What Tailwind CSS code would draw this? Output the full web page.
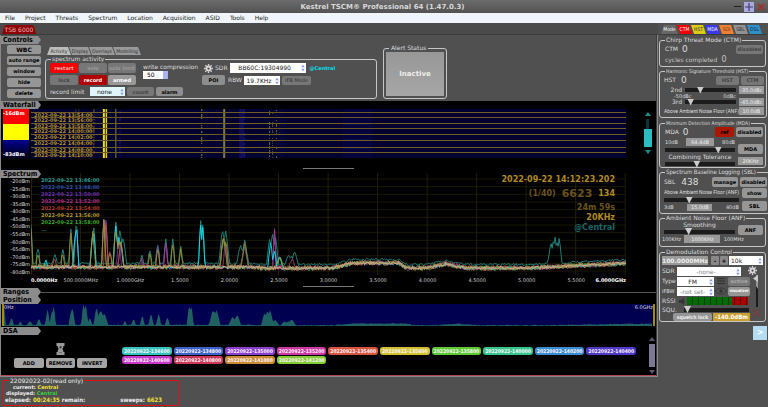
<!DOCTYPE html>
<html lang="en">
<head>
<meta charset="utf-8">
<title>Kestrel TSCM Professional</title>
<script src="https://cdn.jsdelivr.net/npm/@tailwindcss/browser@4"></script>
</head>
<body class="flex min-h-screen flex-col overflow-x-hidden bg-[#505050] font-['DejaVu_Sans','Verdana',sans-serif] text-[6px] leading-[8px] text-[#dedede]">

<svg class="hidden" aria-hidden="true">
  <symbol id="updown" viewBox="0 0 4 8"><path d="M.3 3.2 2 .8 3.7 3.2zM.3 4.8 2 7.2 3.7 4.8z" fill="#8b9af5"/></symbol>
  <symbol id="gear" viewBox="0 0 20 20"><path fill="none" stroke="#d6d6d6" stroke-width="4" d="M10 5.5a4.5 4.5 0 1 0 .01 0z"/><path stroke="#d6d6d6" stroke-width="3" d="M10 0v4M10 16v4M0 10h4M16 10h4M3 3l3 3M14 14l3 3M17 3l-3 3M6 14l-3 3"/></symbol>
</svg>

<header>
  <div class="flex h-[13px] items-center bg-linear-to-b from-[#6c6c6c] to-[#525252]">
    <span class="flex-1"></span>
    <h1 class="text-[7px] font-bold text-[#d8d8d8]">Kestrel TSCM® Professional 64 (1.47.0.3)</h1>
    <div class="flex flex-1 items-center justify-end gap-[3px] pr-[3px]">
      <button aria-label="Minimize" class="h-[1px] w-[7px] bg-[#222]"></button>
      <button aria-label="Maximize" class="flex size-[10px] items-center justify-center bg-[#aaa8de]"><svg class="size-[8px]" viewBox="0 0 8 8"><path d="M4 0v8M0 4h8" stroke="#3f3f6c" stroke-width="1.2"/></svg></button>
      <button aria-label="Close" class="size-[8px]"><svg class="size-[8px]" viewBox="0 0 8 8"><path d="M1 1l6 6M7 1 1 7" stroke="#b02a2a" stroke-width="1.6"/></svg></button>
    </div>
  </div>
  <nav class="flex h-[10px] items-center gap-[10px] bg-[#eff5fa] pl-[5px] text-[#222]">
    <a href="#">File</a><a href="#">Project</a><a href="#">Threats</a><a href="#">Spectrum</a><a href="#">Location</a><a href="#">Acquisition</a><a href="#">ASID</a><a href="#">Tools</a><a href="#">Help</a>
  </nav>
</header>

<div class="flex flex-1">
<div class="flex min-w-0 flex-1 flex-col">
  <div class="flex h-[12px] items-end border-b border-[#3c3c3c] bg-[#4a4a4a] pl-[2px]">
    <button class="h-[9px] w-[34px] bg-[#8e0000] text-[#e8b8b8] [clip-path:polygon(0_100%,2px_20%,4px_0,30px_0,32px_20%,100%_100%)]">TSB 6000</button>
  </div>

  <div class="flex flex-1 flex-col">
  <div class="border-x border-[#888]">
    <!-- Controls -->
    <section class="flex h-[66px] border-r border-[#3c3c3c] bg-[#505050]">
      <div class="w-[40px]">
        <h2 class="mt-[1px] h-[8px] bg-[#8c8c8c] pl-[2px] font-['DejaVu_Sans_Condensed','DejaVu_Sans',sans-serif] text-[7px] font-bold text-black [clip-path:polygon(0_0,37px_0,100%_50%,37px_100%,0_100%)]">Controls</h2>
        <div class="flex flex-col gap-[2px] pl-[6px] pt-[1px] text-[6px] leading-[9px] font-bold text-black">
          <button class="h-[9px] rounded-[2px] bg-[#969696]">WBC</button>
          <button class="h-[9px] rounded-[2px] bg-[#969696] text-[5px]">auto range</button>
          <button class="h-[9px] rounded-[2px] bg-[#969696] text-[5px]">window</button>
          <button class="h-[9px] rounded-[2px] bg-[#969696] text-[5px]">hide</button>
          <button class="h-[9px] rounded-[2px] bg-[#969696] text-[5px]">delete</button>
        </div>
      </div>
      <div class="ml-[4px] flex w-[332px] flex-col pt-[12px]">
        <div class="flex h-[8px] pl-[2px] font-['DejaVu_Sans_Condensed','DejaVu_Sans',sans-serif] text-[5px] text-[#333]">
          <button class="w-[24px] bg-[#bbb] [clip-path:polygon(0_100%,3px_0,21px_0,100%_100%)]">Activity</button>
          <button class="-ml-[2px] w-[22px] bg-[#999] [clip-path:polygon(0_0,19px_0,100%_100%,3px_100%)]">Display</button>
          <button class="-ml-[2px] w-[26px] bg-[#999] [clip-path:polygon(0_0,23px_0,100%_100%,3px_100%)]">Overlays</button>
          <button class="-ml-[2px] w-[28px] bg-[#999] [clip-path:polygon(0_0,25px_0,100%_100%,3px_100%)]">Modelling</button>
        </div>
        <fieldset class="h-[44px] rounded-[3px] border border-[#c6c6c6] px-[4px]">
          <legend class="ml-[1px] px-[1px]">spectrum activity</legend>
          <div class="flex">
            <div class="grid grid-cols-[28px_28px_28px] gap-x-[1px] gap-y-[2px] text-center text-[5px] leading-[10px] font-bold">
              <button class="h-[10px] rounded-[2px] bg-[#f80000] text-[#ffb0b0]">restart</button>
              <button class="h-[10px] rounded-[2px] bg-[#777] text-[#999]">solo</button>
              <button class="h-[10px] rounded-[2px] bg-[#777] whitespace-nowrap text-[#999]">solo limit</button>
              <button class="h-[10px] rounded-[2px] bg-[#777] text-[#444]">lock</button>
              <button class="h-[10px] rounded-[2px] bg-[#b00000] text-white">record</button>
              <button class="h-[10px] rounded-[2px] bg-[#999] text-white">armed</button>
            </div>
            <div class="ml-[7px] w-[52px]">
              <label for="wc" class="block whitespace-nowrap">write compression</label>
              <input id="wc" value="50" class="h-[8px] w-[25px] bg-linear-to-r from-white from-80% to-[#a9b4f4] to-80% pl-[4px] text-[6px] text-black">
            </div>
            <div class="ml-[7px] flex flex-col gap-[2px]">
              <div class="flex items-center gap-[2px]">
                <svg class="ml-[2px] size-[9px]"><use href="#gear"/></svg>
                <label for="sdr">SDR</label>
                <span class="relative flex w-[76px]"><select id="sdr" class="h-[10px] w-full appearance-none bg-white pr-[6px] text-[6px] leading-[10px] text-[#222] [text-align-last:center]"><option>BB60C:19304990</option></select><svg class="absolute top-[1px] right-[1px] h-[8px] w-[4px]"><use href="#updown"/></svg></span>
                <b class="pl-[2px] text-[5px] text-[#00e0f0]">@Central</b>
              </div>
              <div class="flex items-center gap-[2px]">
                <button class="h-[10px] w-[23px] rounded-[2px] bg-[#8e8e8e] text-[5px] font-bold text-black">POI</button>
                <label for="rbw" class="pl-[1px]">RBW</label>
                <span class="relative flex w-[36px]"><select id="rbw" class="h-[9px] w-full appearance-none bg-white pr-[6px] text-[6px] leading-[9px] text-[#222] [text-align-last:center]"><option>19.7KHz</option></select><svg class="absolute top-[1px] right-[1px] h-[8px] w-[4px]"><use href="#updown"/></svg></span>
                <button class="h-[9px] w-[29px] rounded-[2px] bg-[#777] text-[5px] leading-[9px] text-[#333]">IFB Mode</button>
              </div>
            </div>
          </div>
          <div class="mt-[2px] flex items-center gap-[2px]">
            <label for="rl" class="w-[38px] whitespace-nowrap">record limit</label>
            <span class="relative flex w-[35px]"><select id="rl" class="h-[9px] w-full appearance-none bg-[#def5fa] pr-[6px] text-[6px] leading-[9px] text-[#222] [text-align-last:center]"><option>none</option></select><svg class="absolute top-[1px] right-[1px] h-[8px] w-[4px]"><use href="#updown"/></svg></span>
            <button class="h-[9px] w-[27px] rounded-[2px] bg-[#777] text-[5px] font-bold text-[#444]">count</button>
            <button class="h-[9px] w-[27px] rounded-[2px] bg-[#8e8e8e] text-[5px] font-bold text-black">alarm</button>
          </div>
        </fieldset>
      </div>
      <fieldset class="mt-[9px] ml-[6px] flex h-[55px] w-[64px] rounded-[3px] border border-[#c6c6c6] px-[2px]">
        <legend class="ml-[3px] px-[2px]">Alert Status</legend>
        <button class="h-[44px] w-full bg-linear-to-b from-[#989898] to-[#a6a6a6] text-[7px] font-bold text-[#eee]">Inactive</button>
      </fieldset>
    </section>

    <div class="flex h-[275px] flex-col border-r border-[#3c3c3c] bg-black">
      <!-- Waterfall -->
      <h2 class="h-[8px] w-[40px] shrink-0 bg-[#8c8c8c] pl-[2px] font-['DejaVu_Sans_Condensed','DejaVu_Sans',sans-serif] text-[7px] font-bold text-black [clip-path:polygon(0_0,37px_0,100%_50%,37px_100%,0_100%)]">Waterfall</h2>
      <div class="flex h-[59px] shrink-0">
        <div class="ml-[2px] flex h-[49px] w-[26px] flex-col justify-between bg-linear-to-b from-[#f00] from-30% via-[#ff0] via-30% to-[#ff0] to-62% text-[5px] font-bold text-white">
          <span>-16dBm</span>
          <span class="flex h-[18px] items-end bg-linear-to-b from-[#000090] to-[#00001c]">-83dBm</span>
        </div>
        <div class="relative ml-[2px] h-[49px] min-w-0 flex-1 overflow-hidden bg-[#000030]">
          <svg id="fall" class="h-full w-full" viewBox="0 0 596 49" preserveAspectRatio="none"></svg>
          <div id="falltimes" class="absolute inset-0 text-[5px] leading-[6px] font-bold text-[#b49128]"></div>
        </div>
        <div class="flex w-[30px] flex-col items-center gap-[1px] pt-[3px] pl-[13px]">
          <svg class="h-[4px] w-[6px]" viewBox="0 0 6 4"><path d="M0 4 3 0l3 4z" fill="#208c8c"/></svg>
          <i class="mt-[2px] h-[10px] w-[3px] bg-[#0b3236]"></i>
          <i class="-mt-[1px] h-[18px] w-[8px] bg-[#29bcc0]"></i>
          <svg class="mt-[2px] h-[4px] w-[6px]" viewBox="0 0 6 4"><path d="M0 0h6L3 4z" fill="#208c8c"/></svg>
        </div>
      </div>
      <i class="mx-auto h-[1px] w-[51px] shrink-0 bg-[#777]"></i>
      <!-- Spectrum -->
      <h2 class="mt-[1px] h-[8px] w-[40px] shrink-0 bg-[#8c8c8c] pl-[2px] font-['DejaVu_Sans_Condensed','DejaVu_Sans',sans-serif] text-[7px] font-bold text-black [clip-path:polygon(0_0,37px_0,100%_50%,37px_100%,0_100%)]">Spectrum</h2>
      <div class="-mt-[5px] flex h-[102px] shrink-0 pr-[30px]">
        <div class="flex w-[30px] flex-col justify-between pt-[5px] pr-px text-right text-[5px] leading-[6px] text-[#ddd]" id="ylabels"></div>
        <div class="relative min-w-0 flex-1">
          <svg id="plot" class="h-full w-full" viewBox="0 0 596 102" preserveAspectRatio="none"></svg>
          <div id="legend" class="absolute top-[4px] left-[10px] text-[5px] leading-[7px] font-bold"></div>
          <div class="absolute top-[2px] right-[11px] text-right text-[8px] leading-[10px] font-bold text-[#6a5218]">
            <p class="text-[#b08a20]">2022-09-22 14:12:23.202</p>
            <p class="flex h-[18px] items-center justify-end gap-[6px]">(1/40) <span class="text-[11px]">6623</span><span class="text-[#b08a20]">134</span></p>
            <p>24m 59s</p>
            <p class="text-[#b08a20]">20KHz</p>
            <p class="text-[#1c6666]">@Central</p>
          </div>
        </div>
      </div>
      <div class="mt-[1px] flex h-[10px] shrink-0 pr-[30px] pl-[30px] text-[5px] whitespace-nowrap text-[#ccc]">
        <b class="w-[25px] text-white">0.0000Hz</b><span class="flex-1 text-center">500.0000MHz</span><span class="flex-1 text-center">1.0000GHz</span><span class="flex-1 text-center">1.5000</span><span class="flex-1 text-center">2.0000</span><span class="flex-1 text-center">2.5000</span><span class="flex-1 text-center">3.0000</span><span class="flex-1 text-center">3.5000</span><span class="flex-1 text-center">4.0000</span><span class="flex-1 text-center">4.5000</span><span class="flex-1 text-center">5.0000</span><span class="flex-1 text-center">5.5000</span><b class="flex w-[25px] justify-end text-white">6.0000GHz</b>
      </div>
      <i class="mx-auto h-[1px] w-[51px] shrink-0 bg-[#777]"></i>
      <!-- Ranges and position -->
      <div class="mt-[1px] flex h-[8px] shrink-0 items-center">
        <h2 class="h-[8px] w-[40px] bg-[#8c8c8c] pl-[2px] font-['DejaVu_Sans_Condensed','DejaVu_Sans',sans-serif] text-[7px] font-bold text-black [clip-path:polygon(0_0,37px_0,100%_50%,37px_100%,0_100%)]">Ranges</h2>
        <i class="h-[1px] flex-1 bg-[#555]"></i>
      </div>
      <h2 class="h-[8px] w-[40px] shrink-0 bg-[#8c8c8c] pl-[2px] font-['DejaVu_Sans_Condensed','DejaVu_Sans',sans-serif] text-[7px] font-bold text-black [clip-path:polygon(0_0,37px_0,100%_50%,37px_100%,0_100%)]">Position</h2>
      <div class="relative mx-px h-[22px] shrink-0 border-x-2 border-[#a08c00] bg-[#000050]">
        <svg id="band" class="h-full w-full" viewBox="0 0 654 22" preserveAspectRatio="none"></svg>
        <div class="absolute inset-x-0 top-0 flex justify-between text-[5px] leading-[6px] text-[#ddd]"><span>0Hz</span><span>6.0GHz</span></div>
      </div>
      <!-- DSA -->
      <h2 class="mt-[1px] h-[8px] w-[40px] shrink-0 bg-[#8c8c8c] pl-[2px] font-['DejaVu_Sans_Condensed','DejaVu_Sans',sans-serif] text-[7px] font-bold text-black [clip-path:polygon(0_0,37px_0,100%_50%,37px_100%,0_100%)]">DSA</h2>
      <div class="flex flex-1 pl-[13px]">
        <div class="flex w-[93px] flex-col items-center gap-[3px] pt-[8px]">
          <svg class="h-[12px] w-[9px]" viewBox="0 0 9 12"><path d="M.5 0h8v3H7.3v1.5L6.3 6l1 1.500V9h1.200v3h-8V9h1.200V7.500L2.700 6 1.700 4.500V3H.5z" fill="#9a9a9a"/><path d="M3.500 3.500h2v1l-1 1-1-1zM3 9.500h3" fill="#333" stroke="#555" stroke-width=".6"/></svg>
          <div class="flex w-full gap-[2px] text-[5px] font-bold text-black">
            <button class="h-[10px] flex-1 rounded-[2px] bg-[#a4a4a4]">ADD</button><button class="h-[10px] flex-1 rounded-[2px] bg-[#a4a4a4]">REMOVE</button><button class="h-[10px] flex-1 rounded-[2px] bg-[#a4a4a4]">INVERT</button>
          </div>
        </div>
        <div id="chips" class="mt-[12px] ml-[15px] grid flex-1 grid-cols-10 content-start gap-x-[2px] gap-y-px font-['DejaVu_Sans_Condensed','DejaVu_Sans',sans-serif] text-[5px] leading-[8px] font-bold text-[#fff5ff]"></div>
        <div class="flex w-[20px] flex-col items-end gap-[2px] pt-[2px] pr-[1px]">
          <svg class="h-[4px] w-[6px]" viewBox="0 0 6 4"><path d="M0 4 3 0l3 4z" fill="#5c5a70"/></svg>
          <i class="mt-[1px] h-[23px] w-[6px] bg-[#7b7994]"></i>
          <svg class="mt-[1px] h-[4px] w-[6px]" viewBox="0 0 6 4"><path d="M0 0h6L3 4z" fill="#5c5a70"/></svg>
        </div>
      </div>
      <i class="h-[1px] bg-[#b04848]"></i>
    </div>
  </div>
  <footer class="flex-1 border-t border-[#888] pl-[2px]">
    <fieldset class="h-[29px] w-[177px] rounded-[2px] border border-[#e01010] px-[2px] font-bold leading-[6px] text-[#eee]">
      <legend class="ml-[4px] px-[1px] font-normal leading-[7px]">22092022-02(read only)</legend>
      <p class="pl-[8px] text-[5px]">current: <span class="text-[#f4e23c]">Central</span></p>
      <p class="pl-px text-[5px]">displayed: <span class="text-[#3ad23a]">Central</span></p>
      <p class="flex h-[7px] items-center gap-[2px] font-['DejaVu_Sans_Condensed','DejaVu_Sans',sans-serif] text-[6px]">elapsed: <span class="text-[#f4e23c]">00:24:35</span> remain: <span class="pl-[33px]">sweeps:</span> <span class="text-[#f4e23c]">6623</span></p>
    </fieldset>
  </footer>
  </div>
</div>

<!-- Mode panel -->
<aside class="w-[110px] shrink-0 bg-[#505050] pr-[2px] pl-[1px]">
  <div class="flex h-[12px] items-end border-b border-[#3c3c3c] pl-[2px] font-['DejaVu_Sans_Condensed','DejaVu_Sans',sans-serif] text-[5px] leading-[9px]">
    <button class="h-[9px] w-[17px] bg-[#666] text-white [clip-path:polygon(0_100%,3px_0,14px_0,100%_100%)]">Mode</button>
    <button class="-ml-[1px] h-[9px] w-[15px] bg-[#f00000] text-white [clip-path:polygon(0_0,12px_0,100%_100%,3px_100%)]">CTM</button>
    <button class="-ml-[1px] h-[9px] w-[15px] bg-[#dccb16] text-[#333] [clip-path:polygon(0_0,12px_0,100%_100%,3px_100%)]">HST</button>
    <button class="-ml-[1px] h-[9px] w-[15px] bg-[#3838f0] text-white [clip-path:polygon(0_0,12px_0,100%_100%,3px_100%)]">MDA</button>
    <button class="-ml-[1px] h-[9px] w-[15px] bg-[#ee8030] text-[#633] [clip-path:polygon(0_0,12px_0,100%_100%,3px_100%)]">SOI</button>
    <button class="-ml-[1px] h-[9px] w-[15px] bg-[#929292] text-[#333] [clip-path:polygon(0_0,12px_0,100%_100%,3px_100%)]">SBL</button>
    <button class="-ml-[1px] h-[9px] w-[15px] bg-[#3090c8] text-[#124] [clip-path:polygon(0_0,12px_0,100%_100%,3px_100%)]">DSL</button>
  </div>

  <fieldset class="mt-px h-[31px] rounded-[3px] border border-[#c6c6c6] px-[2px]">
    <legend class="ml-[3px] px-[1px]">Chirp Threat Mode (CTM)</legend>
    <div class="flex h-[10px] items-center gap-[4px] pl-[3px]">CTM <span class="flex-1 text-[9px]">0</span><button class="h-[9px] w-[27px] rounded-[2px] bg-[#777] text-[5px] font-bold text-[#444]">disabled</button></div>
    <div class="flex h-[12px] items-center gap-[4px] pl-[3px] text-[#c4c4c4]">cycles completed <span class="text-[8px]">0</span></div>
  </fieldset>

  <fieldset class="h-[51px] rounded-[3px] border border-[#c6c6c6] px-[2px]">
    <legend class="ml-[3px] px-[1px] font-['DejaVu_Sans_Condensed','DejaVu_Sans',sans-serif] text-[5px]">Harmonic Signature Threshold (HST)</legend>
    <div class="flex h-[10px] items-center gap-[2px] pl-[2px]">HST <span class="flex-1 pl-[3px] text-[9px]">0</span><button class="h-[9px] w-[23px] rounded-[2px] bg-[#777] text-[5px] font-bold text-[#444]">HST</button><button class="h-[9px] w-[23px] rounded-[2px] bg-[#777] text-[5px] font-bold text-[#444]">CTM</button></div>
    <div class="grid grid-cols-[17px_1fr_25px] items-center gap-x-[3px] pt-px pl-[3px]">
      <label for="h2" class="text-right">2nd</label>
      <input id="h2" type="range" value="27" class="h-[8px] w-full appearance-none bg-linear-to-b from-transparent from-40% via-[#1c1c1c] via-40% to-[#1c1c1c] to-100% bg-size-[100%_6px] bg-no-repeat [&::-webkit-slider-thumb]:size-[7px] [&::-webkit-slider-thumb]:appearance-none [&::-webkit-slider-thumb]:bg-[#ccc] [&::-webkit-slider-thumb]:[clip-path:polygon(0_0,100%_0,50%_100%)]">
      <output class="h-[8px] bg-[#999] text-center text-[5px] text-[#eee]">-35.0dBc</output>
      <div class="col-span-2 flex h-[4px] items-center justify-between pl-[9px] text-[5px] leading-[4px]"><span>-50dBc</span><span>0dBc</span></div><span></span>
      <label for="h3" class="text-right">3rd</label>
      <input id="h3" type="range" value="5" class="h-[8px] w-full appearance-none bg-linear-to-b from-transparent from-40% via-[#1c1c1c] via-40% to-[#1c1c1c] to-100% bg-size-[100%_6px] bg-no-repeat [&::-webkit-slider-thumb]:size-[7px] [&::-webkit-slider-thumb]:appearance-none [&::-webkit-slider-thumb]:bg-[#ccc] [&::-webkit-slider-thumb]:[clip-path:polygon(0_0,100%_0,50%_100%)]">
      <output class="h-[8px] bg-[#999] text-center text-[5px] text-[#eee]">-45.0dBc</output>
    </div>
    <div class="flex items-center justify-between pt-px pl-[2px] text-[5px]"><span class="font-['Roboto','Liberation_Sans',sans-serif] whitespace-nowrap">Above Ambient Noise Floor (ANF)</span><output class="w-[25px] bg-[#999] text-center text-[#eee]">10.0dB</output></div>
  </fieldset>

  <fieldset class="mt-px h-[49px] rounded-[3px] border border-[#c6c6c6] px-[2px]">
    <legend class="ml-[3px] px-[1px] font-['DejaVu_Sans_Condensed','DejaVu_Sans',sans-serif] text-[5px]">Minimum Detection Amplitude (MDA)</legend>
    <div class="flex h-[10px] items-center gap-[2px] pl-[3px]">MDA <span class="flex-1 pl-[2px] text-[9px]">0</span><button class="h-[10px] w-[19px] rounded-[2px] bg-[#aa1800] text-[5px] font-bold text-black">ref</button><button class="h-[10px] w-[27px] rounded-[2px] bg-[#969696] text-[5px] font-bold text-black">disabled</button></div>
    <div class="grid grid-cols-[1fr_25px] gap-x-[3px] pt-px pl-[3px] text-[5px]">
      <div>
        <div class="flex justify-between leading-[8px]"><span>10dB</span><output class="w-[28px] bg-[#999] text-center text-[#eee]">64.4dB</output><span>80dB</span></div>
        <input aria-label="Detection amplitude" type="range" value="79" class="block h-[8px] w-full appearance-none bg-linear-to-b from-transparent from-40% via-[#1c1c1c] via-40% to-[#1c1c1c] to-100% bg-size-[100%_6px] bg-no-repeat [&::-webkit-slider-thumb]:size-[7px] [&::-webkit-slider-thumb]:appearance-none [&::-webkit-slider-thumb]:bg-[#ccc] [&::-webkit-slider-thumb]:[clip-path:polygon(0_0,100%_0,50%_100%)]">
        <label for="ct" class="block text-center text-[6px] leading-[6px]">Combining Tolerance</label>
        <input id="ct" type="range" value="45" class="block h-[8px] w-full appearance-none bg-linear-to-b from-transparent from-40% via-[#1c1c1c] via-40% to-[#1c1c1c] to-100% bg-size-[100%_6px] bg-no-repeat [&::-webkit-slider-thumb]:size-[7px] [&::-webkit-slider-thumb]:appearance-none [&::-webkit-slider-thumb]:bg-[#ccc] [&::-webkit-slider-thumb]:[clip-path:polygon(0_0,100%_0,50%_100%)]">
      </div>
      <div class="flex flex-col justify-between pt-[6px] pb-[3px]"><button class="h-[10px] rounded-[2px] bg-[#969696] font-bold text-black">MDA</button><output class="bg-[#999] text-center text-[#eee]">20KHz</output></div>
    </div>
  </fieldset>

  <fieldset class="h-[46px] rounded-[3px] border border-[#c6c6c6] px-[2px]">
    <legend class="ml-[3px] px-[1px] font-['DejaVu_Sans_Condensed','DejaVu_Sans',sans-serif] text-[6px]">Spectrum Baseline Logging (SBL)</legend>
    <div class="flex h-[11px] items-center gap-[2px] pl-[2px]">SBL <span class="flex-1 pl-[4px] text-[9px]">438</span><button class="h-[10px] w-[26px] rounded-[2px] bg-[#969696] text-[5px] font-bold text-black">manage</button><button class="h-[10px] w-[27px] rounded-[2px] bg-[#969696] text-[5px] font-bold text-black">disabled</button></div>
    <div class="grid grid-cols-[1fr_25px] gap-x-[3px] pt-px pl-[2px] text-[5px]">
      <div>
        <label for="sb" class="block text-center font-['Roboto','Liberation_Sans',sans-serif] whitespace-nowrap">Above Ambient Noise Floor (ANF)</label>
        <input id="sb" type="range" value="32" class="block h-[8px] w-full appearance-none bg-linear-to-b from-transparent from-40% via-[#1c1c1c] via-40% to-[#1c1c1c] to-100% bg-size-[100%_6px] bg-no-repeat [&::-webkit-slider-thumb]:size-[7px] [&::-webkit-slider-thumb]:appearance-none [&::-webkit-slider-thumb]:bg-[#ccc] [&::-webkit-slider-thumb]:[clip-path:polygon(0_0,100%_0,50%_100%)]">
        <div class="flex justify-between leading-[7px]"><span>3dB</span><output class="w-[25px] bg-[#999] text-center text-[#eee]">15.0dB</output><span>40dB</span></div>
      </div>
      <div class="flex flex-col justify-between"><button class="h-[10px] rounded-[2px] bg-[#969696] font-bold text-black">show</button><button class="h-[10px] rounded-[2px] bg-[#969696] font-bold text-black">SBL</button></div>
    </div>
  </fieldset>

  <fieldset class="h-[33px] rounded-[3px] border border-[#c6c6c6] px-[2px]">
    <legend class="ml-[3px] px-[1px]">Ambient Noise Floor (ANF)</legend>
    <div class="grid grid-cols-[1fr_25px] gap-x-[3px] pl-[2px] text-[5px]">
      <div>
        <label for="sm" class="block text-center text-[6px] leading-[6px]">Smoothing</label>
        <input id="sm" type="range" value="33" class="block h-[7px] w-full appearance-none bg-linear-to-b from-transparent from-40% via-[#1c1c1c] via-40% to-[#1c1c1c] to-100% bg-size-[100%_6px] bg-no-repeat [&::-webkit-slider-thumb]:size-[7px] [&::-webkit-slider-thumb]:appearance-none [&::-webkit-slider-thumb]:bg-[#ccc] [&::-webkit-slider-thumb]:[clip-path:polygon(0_0,100%_0,50%_100%)]">
      </div>
      <button class="mt-[3px] h-[10px] rounded-[2px] bg-[#969696] font-bold text-black">ANF</button>
    </div>
    <div class="flex w-[82px] justify-between text-[5px]"><span>100KHz</span><output class="w-[36px] bg-[#999] text-center text-[#eee]">1000KHz</output><span>100MHz</span></div>
  </fieldset>

  <fieldset class="mt-px h-[74px] rounded-[3px] border border-[#c6c6c6] px-[2px]">
    <legend class="ml-[3px] px-[1px]">Demodulation Control</legend>
    <div class="flex items-center gap-px">
      <output class="mr-[2px] h-[9px] w-[46px] bg-[#999] text-center text-[6px] leading-[9px] font-bold text-[#eee]">100.0000MHz</output>
      <button aria-label="Step down" class="h-[9px] w-[8px] rounded-[1px] bg-[#888] leading-[8px] font-bold text-black">-</button>
      <button aria-label="Step up" class="h-[9px] w-[8px] rounded-[1px] bg-[#888] leading-[8px] font-bold text-black">+</button>
      <span class="relative flex flex-1"><select aria-label="Step size" class="h-[9px] w-full appearance-none bg-white pl-[2px] text-[6px] leading-[9px] text-[#222]"><option>10k</option></select><svg class="absolute top-[1px] right-[1px] h-[8px] w-[4px]"><use href="#updown"/></svg></span>
    </div>
    <div class="flex pt-px">
      <div class="w-[88px]">
        <div class="flex h-[10px] items-center"><label for="ds" class="w-[15px]">SDR</label><span class="relative flex w-[64px]"><select id="ds" class="h-[9px] w-full appearance-none bg-white pr-[6px] text-[6px] leading-[9px] text-[#888] [text-align-last:center]"><option>-none-</option></select><svg class="absolute top-[1px] right-[1px] h-[8px] w-[4px]"><use href="#updown"/></svg></span></div>
        <div class="flex h-[10px] items-center"><label for="dt" class="w-[15px]">Type</label><span class="relative flex w-[38px]"><select id="dt" class="h-[9px] w-full appearance-none bg-white pr-[6px] text-[6px] leading-[9px] text-[#222] [text-align-last:center]"><option>FM</option></select><svg class="absolute top-[1px] right-[1px] h-[8px] w-[4px]"><use href="#updown"/></svg></span>
          <svg class="mx-[3px] h-[8px] w-[8px]" viewBox="0 0 8 8"><path d="M0 1.500h8M0 4h8M0 6.500h8" stroke="#333"/></svg>
          <button class="h-[9px] w-[22px] rounded-[2px] bg-[#777] text-[5px] font-bold text-[#aaa]">active</button></div>
        <div class="flex h-[10px] items-center"><label for="di" class="w-[15px] text-[5px]">IFBW</label><span class="relative flex w-[38px]"><select id="di" class="h-[9px] w-full appearance-none bg-white pr-[6px] text-[6px] leading-[9px] text-[#888] [text-align-last:center]"><option>-not set-</option></select><svg class="absolute top-[1px] right-[1px] h-[8px] w-[4px]"><use href="#updown"/></svg></span>
          <svg class="mx-px h-[8px] w-[12px]" viewBox="0 0 12 8"><path d="M.5 4C3 0 9 0 11.500 4 9 8 3 8 .5 4z" fill="#555" stroke="#333" stroke-width=".8"/><circle cx="6" cy="4" r="1.800" fill="#333"/></svg>
          <button class="h-[9px] w-[22px] rounded-[2px] bg-[#969696] font-['DejaVu_Sans_Condensed','DejaVu_Sans',sans-serif] text-[4px] font-bold text-white">visualizer</button></div>
        <div class="flex h-[10px] items-center"><span class="w-[17px]">RSSI</span><svg class="mr-px h-[7px] w-[7px]" viewBox="0 0 7 7"><path d="M0 2.500h2L4.500.5v6L2 4.500H0zM5.500 2v3" fill="#333" stroke="#333" stroke-width=".5"/></svg>
          <span class="flex h-[8px] w-[61px] bg-linear-to-r from-[#006a00] from-73% to-[#a80000] to-73%"><i class="flex-1 bg-size-[6px_100%] bg-linear-to-r from-transparent from-80% to-black/40 to-80%"></i></span></div>
        <div class="flex h-[7px] items-center"><label for="sq" class="w-[22px]">SQU.</label><input id="sq" type="range" value="0" class="block h-[7px] w-[65px] appearance-none bg-linear-to-b from-transparent from-40% via-[#1c1c1c] via-40% to-[#1c1c1c] to-100% bg-size-[100%_6px] bg-no-repeat [&::-webkit-slider-thumb]:size-[7px] [&::-webkit-slider-thumb]:appearance-none [&::-webkit-slider-thumb]:bg-[#ccc] [&::-webkit-slider-thumb]:[clip-path:polygon(0_0,100%_0,50%_100%)]"></div>
        <div class="flex gap-px pl-[11px]"><button class="h-[8px] w-[39px] rounded-[2px] bg-[#969696] font-['DejaVu_Sans_Condensed','DejaVu_Sans',sans-serif] text-[5px] font-bold text-[#eee]">squelch lock</button><output class="h-[8px] w-[37px] bg-[#c8a032] text-center font-['DejaVu_Sans_Condensed','DejaVu_Sans',sans-serif] text-[6px] font-bold whitespace-nowrap text-white">-140.0dBm</output></div>
      </div>
      <div class="flex w-[12px] flex-col items-center">
        <svg class="-ml-[8px] size-[9px]"><use href="#gear"/></svg>
        <svg class="h-[34px] w-[6px]" viewBox="0 0 6 34"><path d="M4 0v32" stroke="#1c1c1c" stroke-width="2"/><path d="M3 0h2v14L3 11z" fill="#999"/><path d="M5 0v7L0 3.500z" fill="#ccc"/></svg>
        <svg class="h-[8px] w-[9px]" viewBox="0 0 9 8"><path d="M1 3h2l3-2v6L3 5H1z" fill="#555"/><path d="M1 .5l7 7M8 .5l-7 7" stroke="#a02828"/></svg>
      </div>
    </div>
  </fieldset>
  <div class="-mr-px flex justify-end pt-[4px]"><button aria-label="Expand" class="size-[14px] bg-[#b4dcf0] text-[8px] font-bold text-white">&gt;</button></div>
</aside>
</div>

<script>
let seed = 7;
const rnd = () => (seed = (seed * 16807) % 2147483647) / 2147483647;

// [x, height, half width, colours]; x runs over 0..596 for 0..6 GHz
const C = '#10d8e8', T = '#1f8078', O = '#a08c30', R = '#c05050', P = '#7a3cc0', M = '#b03888', G = '#3f9a3f';
const peaks = [
  [0, 45, 1, [O, T]], [7, 16, 1.5, [O, T]], [15, 8, 1, [C]], [24, 8, 2, [T, R]], [32, 14, 1.5, [T, O]],
  [40, 36, 1.5, [T, O]], [44, 32, 1.5, [C, P]], [45.5, 44, 1.5, [C, T, P]], [62, 34, 2, [T, C, O]], [63, 38, 1.5, [T, C]], [73, 50, 1.5, [P, M, O, G]], [75, 49, 1.5, [R, P, M]],
  [79, 16, 1.5, [O, M]], [85, 41, 2, [C, T, O]], [88, 30, 2, [C, P, O]], [89, 34, 3, [T]], [92, 26, 3, [T]], [90, 26, 2, [C, R, O, M]], [111, 9, 1, [T, M]], [119, 14, 1.5, [T, O]],
  [127, 21, 1.5, [O, P, T]], [135, 26, 1.5, [T, P, M]], [142, 26, 1.5, [T, O]], [150, 17, 1.5, [O, T]],
  [170, 45, 1.5, [C, T]], [172, 44, 1.5, [C, T]], [192, 34, 3, [T]], [195, 34, 3, [T]], [193, 31, 3, [R, P, O, G]], [195, 26, 2, [M, O]], [210, 19, 3, [T]], [214, 23, 3, [T, R, M, G]],
  [239, 27, 2, [T]], [242, 32, 3, [T]], [240, 27, 2, [C]], [244, 38, 1, [M, P]], [244, 20, 1.5, [C]], [245, 28, 2, [T]], [249, 12, 3, [G, C, O]], [258, 9, 3, [T]],
  [261, 9, 3, [T, M]], [264, 13, 3, [T]], [521, 20, 3, [T]], [523, 23, 2, [T]], [525, 27, 2, [T]], [527, 23, 2, [T]], [529, 25, 2, [T]]
];
const floor = x => 95 - Math.max(0, Math.min(5, (x - 302) / 4, (376 - x) / 1.5)) - Math.max(0, 4 - Math.abs(x - 416) / 5) - (x > 500 ? (x - 500) / 20 : 0) - (x < 230 ? 1 : 0);
const level = (x, c, k) => {
  let h = 0;
  for (const [px, ph, w, cs] of peaks) if (!c || cs.includes(c)) h = Math.max(h, ph * k * (1 - Math.pow(Math.abs(x - px) / (w + .7), 1.4)));
  return h;
};
let g = '';
for (let i = 0; i < 13; i++) { const y = 6 + i * 7.67; g += `<path d="M0 ${y}H596" stroke="#1a1704"/>`; }
for (let i = 0; i <= 12; i++) { const x = i * 49.6; g += `<path d="M${x} 0V102" stroke="${i ? '#211d06' : '#4a4210'}"/>`; }
const trace = (c, up, amp, w) => {
  let d = '';
  for (let x = 0; x <= 596; x += 1) d += (x ? 'L' : 'M') + x + ' ' + (floor(x) - up - Math.max(0, level(x, c, .88 + .12 * rnd())) + (rnd() - .5) * amp).toFixed(1);
  return `<path d="${d}" fill="none" stroke="${c}" stroke-width="${w}"/>`;
};
g += trace(T, 3.5, 2.2, 1) + trace(P, 0, 5, .8) + trace(M, 0, 5, .8) + trace(R, 0, 5, .8) + trace(G, 0, 5.5, .8) + trace(C, -.3, 2.5, 1) + trace(O, 0, 5, .9) + trace('#c8a07c', 0, 2.4, 1.2);
document.getElementById('plot').innerHTML = g;

// Position overview: the 5.3 GHz burst is not part of its history
let b = 'M0 22';
for (let x = 0; x < 654; x++) { const u = x * 596 / 654; b += `L${x} ${(20.8 - (u < 300 ? Math.max(0, level(u, null, .42)) : 0) - (95 - floor(u)) * .35 + rnd() * .8).toFixed(1)}`; }
document.getElementById('band').innerHTML = `<path d="${b}V22Z" fill="#1f6060"/>`;

// Waterfall
let w = '';
const vs = [[45, 1, '#38361c', 1], [48, 1, '#2a2a20', 1], [63, 1, '#6a6418', 0], [73, 2, '#f0e000', 1], [75.5, 1.5, '#e0d010', 1], [85, 1, '#8a8020', 1], [89, 2, '#101060', 0], [171, 1.2, '#77702a', 0], [193.5, 2, '#a09620', 1], [211, 5, '#0c0c58', 1], [214, 1, '#1c1c70', 0], [239, 1, '#6a6418', 0], [242, 1, '#55501c', 0], [246, 1, '#6a6418', 0]];
for (const [x, sw, c, solid] of vs) {
  if (solid) w += `<path d="M${x} 0V49" stroke="${c}" stroke-width="${sw}"/>`;
  else for (let y = 0; y < 49; y++) if (rnd() > .55) w += `<path d="M${x} ${y}v1" stroke="${c}" stroke-width="${sw}"/>`;
}
w += '<path d="M190 0h6v49h-6zM249 0h4v49h-4zM312 0h30v49h-30z" fill="#0a0a70" opacity=".2"/>';
const ys = [3.5, 8.5, 14.5, 19.5, 25.5, 31.5, 38.5, 43.5];
for (const y of ys) w += `<path d="M0 ${y}H596" stroke="#6e5a22"/>`;
document.getElementById('fall').innerHTML = w;
const mins = ['13:54', '13:56', '13:58', '14:00', '14:02', '14:04', '14:08', '14:10'];
document.getElementById('falltimes').innerHTML = mins.map((m, i) => `<span class="absolute left-[3px]" style="top:${Math.floor(ys[i])}px">2022-09-22 ${m}:00</span>`).join('');

document.getElementById('ylabels').innerHTML = Array.from({ length: 13 }, (_, i) => `<span>-${20 + i * 5}dBm</span>`).join('');
document.getElementById('legend').innerHTML = [['13:46', '#2a9c94'], ['13:48', '#2c50b0'], ['13:50', '#6a34b4'], ['13:52', '#b03090'], ['13:54', '#b03c2c'], ['13:56', '#b49c28'], ['13:58', '#3ca82c']]
  .map(([t, c]) => `<p style="color:${c}">2022-09-22 ${t}:00</p>`).join('') + '<p style="color:#1f8078">...</p>';
document.getElementById('chips').innerHTML = [['134600', '#34c4bc'], ['134800', '#3a62c8'], ['135000', '#8a40cc'], ['135200', '#cc38a0'], ['135400', '#d8543c'], ['135600', '#d0c030'], ['135800', '#5cc832'], ['140000', '#34c48c'], ['140200', '#3a8cd0'], ['140400', '#5038c8'], ['140600', '#c838c8'], ['140800', '#cc3858'], ['141000', '#cc8c34'], ['141200', '#84cc34']]
  .map(([t, c]) => `<span class="rounded-[3px] text-center whitespace-nowrap" style="background:${c}">20220922-${t}</span>`).join('');
</script>
</body>
</html>
